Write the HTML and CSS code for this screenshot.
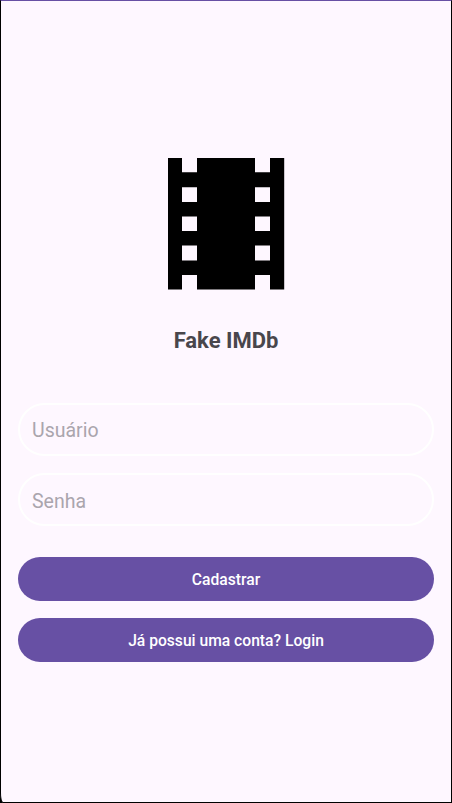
FILE: index.html
```html
<!DOCTYPE html>
<html lang="pt-BR">
<head>
<meta charset="utf-8">
<title>Fake IMDb</title>
<link rel="stylesheet" href="styles.css">
</head>
<body>
<main class="screen">
  <svg class="logo" viewBox="0 0 116 132" aria-hidden="true">
    <path fill-rule="evenodd" d="M0 0H14V14.3H29V0H87V14.3H102V0H116.2V131.6H102V117H87V131.6H29V117H14V131.6H0ZM14 29.3V44H29V29.3ZM14 58.4V73H29V58.4ZM14 87.6V102.4H29V87.6ZM87 29.3V44H102V29.3ZM87 58.4V73H102V58.4ZM87 87.6V102.4H102V87.6Z"/>
  </svg>
  <h1 class="title">Fake IMDb</h1>
  <form class="form">
    <input class="field" type="text" placeholder="Usuário">
    <input class="field field-password" type="password" placeholder="Senha">
    <button class="button button-first" type="button">Cadastrar</button>
    <button class="button" type="button">Já possui uma conta? Login</button>
  </form>
</main>
</body>
</html>
```
FILE: styles.css
```css
* { box-sizing: border-box; }
body { margin: 0; background: #000; font-family: Roboto, sans-serif; }
.screen {
  height: 803px;
  display: flex;
  flex-direction: column;
  align-items: center;
  padding: 157px 17.4px 0;
  background: #fef7ff;
  border: 1px solid #000;
  border-top-color: #6750a4;
  border-bottom-left-radius: 3px 10px;
}
.logo { width: 116px; height: 132px; overflow: visible; }
.title { margin: 37px 0 0; font-size: 22px; line-height: 28px; font-weight: 700; color: #49464c; }
.form { width: 100%; margin-top: 48px; display: flex; flex-direction: column; gap: 17px; }
.field {
  height: 53px;
  padding: 2px 11.6px 0;
  border: 2px solid #fff;
  border-radius: 27px;
  background: transparent;
  font: 400 19.5px Roboto, sans-serif;
  color: #49454f;
  outline: none;
}
.field-password { padding-top: 4px; }
.field::placeholder { color: #aaa5ad; opacity: 1; }
.button {
  height: 44px;
  padding: 1px 0 0;
  border: 0;
  border-radius: 22px;
  background: #6750a4;
  color: #fff;
  font: 500 15.65px Roboto, sans-serif;
}
.button-first { margin-top: 14px; }
```
